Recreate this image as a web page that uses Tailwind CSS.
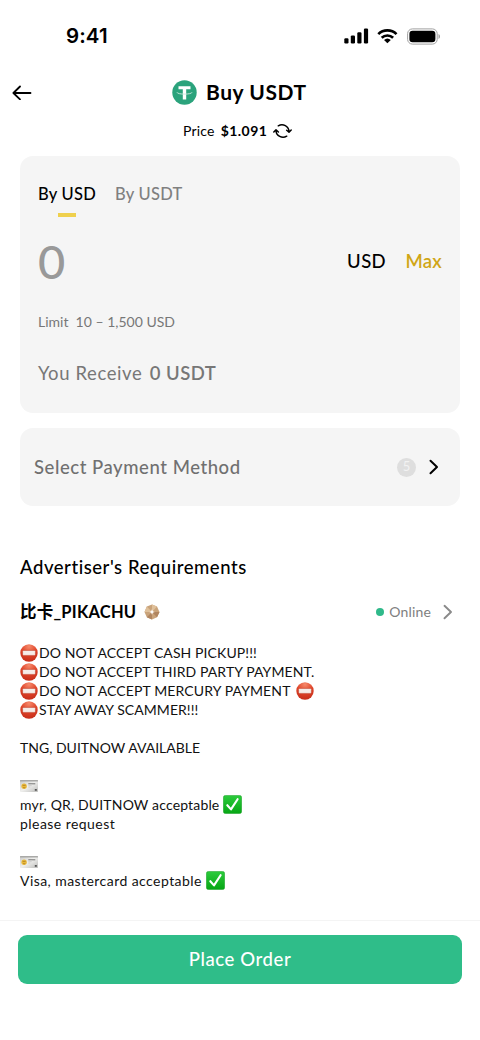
<!DOCTYPE html>
<html lang="en">
<head>
<meta charset="utf-8">
<meta name="viewport" content="width=device-width, initial-scale=1">
<title>Buy USDT</title>
<script src="https://cdn.jsdelivr.net/npm/@tailwindcss/browser@4"></script>
</head>
<body class="bg-white">
<svg class="absolute h-0 w-0">
  <defs>
    <radialGradient id="red" cx=".5" cy=".12" r=".9"><stop offset="0" stop-color="#f58a6c"/><stop offset=".5" stop-color="#e0452a"/><stop offset="1" stop-color="#c52c18"/></radialGradient>
    <linearGradient id="green" x1="0" y1="0" x2="0" y2="1"><stop offset="0" stop-color="#2ccb3c"/><stop offset="1" stop-color="#06a614"/></linearGradient>
    <linearGradient id="silver" x1="0" y1="0" x2="1" y2="1"><stop offset="0" stop-color="#c9c9c7"/><stop offset=".5" stop-color="#efefed"/><stop offset="1" stop-color="#bdbdbb"/></linearGradient>
    <symbol id="no-entry" viewBox="0 0 18 18"><circle cx="9" cy="9" r="8.7" fill="url(#red)"/><rect x="2.6" y="6.4" width="12.8" height="5" rx=".8" fill="#f6ece8" stroke="#b93a25" stroke-width=".5"/></symbol>
    <symbol id="check" viewBox="0 0 19 19"><rect x=".4" y=".4" width="18.2" height="18.2" rx="2" fill="url(#green)" stroke="#0a9a18" stroke-width=".5"/><path d="M4.3 10.2 8 14.4 14.6 4.2" fill="none" stroke="#fff" stroke-width="2.1" stroke-linecap="round" stroke-linejoin="round"/></symbol>
    <symbol id="card" viewBox="0 0 18 12"><rect width="18" height="12" rx=".8" fill="url(#silver)"/><rect width="18" height="1.6" rx=".6" fill="#a9a9a7"/><circle cx="4.1" cy="6.2" r="2.7" fill="#e9b93a"/><path d="M2.6 5.4h3M3.2 7.2l1 1 1-1.2" stroke="#9a6a1c" stroke-width=".6" fill="none"/><path d="M8.3 3.8h7" stroke="#555" stroke-width=".8"/><path d="M8.3 5.6h3.4M8.3 7h2" stroke="#b5b5b5" stroke-width=".5"/><rect x="14.8" y="9" width="2" height="1.8" fill="#555"/></symbol>
  </defs>
</svg>
<main class="flex h-[1040px] w-[480px] flex-col overflow-hidden bg-white font-['Lato','Noto_Sans_CJK_SC',sans-serif] text-black">
  <header class="flex h-[72px] shrink-0 items-center pr-[39px] pl-[66px]">
    <span class="font-['Inter',sans-serif] text-[20.500px] leading-none font-semibold tracking-[0.1px]">9:41</span>
    <div class="ml-auto flex items-center">
      <svg class="h-[16px] w-[25px]" viewBox="0 0 25 16"><rect x=".3" y="10.3" width="4.2" height="5.2" rx="1.2"/><rect x="6.8" y="7.4" width="4.2" height="8.1" rx="1.2"/><rect x="13.3" y="4.2" width="4.2" height="11.3" rx="1.2"/><rect x="19.9" y=".6" width="4.2" height="14.9" rx="1.2"/></svg>
      <svg class="ml-[8px] h-[16px] w-[21px]" viewBox="0 0 21 16"><g fill="none" stroke="#000" stroke-width="2.7"><path d="M1.3 6.1a13 13 0 0 1 18.2 0"/><path d="M4.7 9.8a8.2 8.2 0 0 1 11.4 0"/></g><path d="M10.4 15.3 7 12a5 5 0 0 1 6.8 0z"/></svg>
      <svg class="ml-[9px] h-[17px] w-[34px]" viewBox="0 0 34 17"><rect x=".6" y=".9" width="29.6" height="15.2" rx="4.8" fill="none" stroke="#a0a0a0"/><rect x="2.4" y="2.8" width="26" height="11.4" rx="3.2"/><path d="M31.5 6v5c1-.4 1.5-1.3 1.5-2.5S32.500 6.400 31.500 6z" fill="#a0a0a0"/></svg>
    </div>
  </header>
  <nav class="grid h-[40px] shrink-0 grid-cols-[40px_1fr_40px] items-center">
    <svg class="ml-[12px] h-[16px] w-[20px]" viewBox="0 0 20 16" fill="none" stroke="#000" stroke-width="1.8" stroke-linecap="round" stroke-linejoin="round"><path d="M18.500 9H1.700M8 2.500 1.400 9 8 15.300"/></svg>
    <h1 class="flex h-[40px] items-center pl-[132px]">
      <svg class="h-[25px] w-[25px]" viewBox="0 0 25 25"><circle cx="12.500" cy="12.500" r="12.200" fill="#2ba37c"/><path d="M6.500 6.300h12v3H14.200v10.200h-3.400V9.300H6.500z" fill="#fff"/><path d="M5 12.300c0 2.400 15 2.400 15 0" fill="none" stroke="#c9e8dd" stroke-width=".9"/></svg>
      <span class="mb-[2px] ml-[9px] text-[21px] leading-none font-bold tracking-[0.55px]">Buy USDT</span>
    </h1>
  </nav>
  <div class="flex h-[44px] shrink-0 items-start pt-[10px] pl-[183px]">
    <span class="flex h-[18px] items-center text-[14px] leading-none"><span class="tracking-[0.2px]">Price</span><b class="ml-[6px] tracking-[0.45px]">$1.091</b>
    <svg class="ml-[6px] h-[16px] w-[19px]" viewBox="0 0 19 16" fill="none" stroke="#000" stroke-width="1.500" stroke-linecap="round" stroke-linejoin="round"><path d="M5.300 2.800a7 7 0 0 1 10.700 5.700M13.700 13.200A7 7 0 0 1 3 7.500M.800 9 3 6.800 5.400 9M13.700 7.200 16 9.200 18.200 7"/></svg></span>
  </div>
  <section class="mx-[20px] flex h-[257px] shrink-0 flex-col rounded-[13px] bg-[#f5f5f5] px-[18px]">
    <div class="flex h-[62px] items-start gap-[19px] pt-[28px] text-[16.500px] leading-[20px] font-medium">
      <div class="flex flex-col items-center"><span class="tracking-[0.25px]">By USD</span><i class="mt-[9px] h-[4px] w-[18px] bg-[#efd04d]"></i></div>
      <span class="tracking-[0.25px] text-[#808080]">By USDT</span>
    </div>
    <div class="flex h-[86px] items-center">
      <span class="text-[47px] leading-none font-medium text-[#999]">0</span>
      <span class="mt-[1px] ml-auto text-[18.500px] font-medium tracking-[0.4px]">USD</span>
      <span class="mt-[1px] ml-[19.500px] text-[18.500px] font-semibold tracking-[0.2px] text-[#d0a617]">Max</span>
    </div>
    <p class="-mt-px flex h-[36px] items-center text-[14px] text-[#777]"><span>Limit&nbsp; 10 – 1,500 USD</span></p>
    <p class="mt-[15px] flex h-[40px] items-center text-[18.500px] text-[#777]"><span class="tracking-[0.6px]">You Receive</span><b class="ml-[7.500px] font-semibold tracking-[0.45px]">0 USDT</b></p>
  </section>
  <section class="mx-[20px] mt-[15px] flex h-[78px] shrink-0 items-center rounded-[13px] bg-[#f5f5f5] pr-[21px] pl-[14px]">
    <span class="mt-[2px] text-[18.500px] font-medium tracking-[0.55px] text-[#707070]">Select Payment Method</span>
    <span class="ml-auto flex h-[19px] w-[19px] items-center justify-center rounded-full bg-[#dedede] text-[13px] text-[#f2f2f2]">5</span>
    <svg class="ml-[13px] h-[16px] w-[10px]" viewBox="0 0 10 16" fill="none" stroke="#000" stroke-width="2" stroke-linecap="round" stroke-linejoin="round"><path d="M1.500 1.800 8 8 1.500 14.300"/></svg>
  </section>
  <h2 class="mt-[47px] flex h-[30px] shrink-0 items-center px-[20px] text-[18.500px] font-medium"><span class="tracking-[0.54px]">Advertiser's Requirements</span></h2>
  <div class="mt-[14px] flex h-[30px] shrink-0 items-center pr-[27px] pl-[20px]">
    <b class="text-[16.500px] leading-none tracking-[0.22px]">比卡_PIKACHU</b>
    <svg class="ml-[8px] h-[16px] w-[16px]" viewBox="0 0 16 16"><path d="M8 .5 13 2.600 15.500 8 13 13.200 8 15.500 2.800 13.200.500 8 2.800 2.600z" fill="#c9a37a"/><path d="M8 .5 13 2.600 8 8zM.500 8 2.800 2.600 8 8z" fill="#dfc09a"/><path d="M15.500 8 13 13.200 8 8zM2.800 13.200 8 15.500V8z" fill="#b08560"/><path d="m8 5.300.8 1.900 1.900.8-1.900.8L8 10.700l-.8-1.900L5.300 8l1.900-.8z" fill="#fff"/></svg>
    <i class="ml-auto h-[8px] w-[8px] rounded-full bg-[#2fb98a]"></i>
    <span class="mb-px ml-[5px] text-[14px] tracking-[0.15px] text-[#808080]">Online</span>
    <svg class="ml-[12px] h-[16px] w-[10px]" viewBox="0 0 10 16" fill="none" stroke="#8a8a8a" stroke-width="1.900" stroke-linecap="round" stroke-linejoin="round"><path d="M1.500 1.800 8 8 1.500 14.300"/></svg>
  </div>
  <div class="mt-[16px] px-[20px] text-[14px] leading-[19px] text-[#111]">
    <p class="flex h-[19px] items-center tracking-[0.1px]"><svg class="mr-[1px] h-[18px] w-[18px]"><use href="#no-entry"/></svg><span>DO NOT ACCEPT CASH PICKUP!!!</span></p>
    <p class="flex h-[19px] items-center tracking-[0.1px]"><svg class="mr-[1px] h-[18px] w-[18px]"><use href="#no-entry"/></svg><span>DO NOT ACCEPT THIRD PARTY PAYMENT.</span></p>
    <p class="flex h-[19px] items-center tracking-[0.12px]"><svg class="mr-[1px] h-[18px] w-[18px]"><use href="#no-entry"/></svg><span>DO NOT ACCEPT MERCURY PAYMENT</span><svg class="ml-[5px] h-[18px] w-[18px]"><use href="#no-entry"/></svg></p>
    <p class="flex h-[19px] items-center tracking-[0.05px]"><svg class="mr-[1px] h-[18px] w-[18px]"><use href="#no-entry"/></svg><span>STAY AWAY SCAMMER!!!</span></p>
    <p class="mt-[19px] h-[19px]">TNG, DUITNOW AVAILABLE</p>
    <p class="mt-[19px] flex h-[19px] items-center"><svg class="h-[12px] w-[18px]"><use href="#card"/></svg></p>
    <p class="flex h-[19px] items-center tracking-[0.16px]"><span>myr, QR, DUITNOW acceptable</span><svg class="ml-[4px] h-[19px] w-[19px]"><use href="#check"/></svg></p>
    <p class="h-[19px] tracking-[0.45px]">please request</p>
    <p class="mt-[19px] flex h-[19px] items-center"><svg class="h-[12px] w-[18px]"><use href="#card"/></svg></p>
    <p class="flex h-[19px] items-center tracking-[0.44px]"><span>Visa, mastercard acceptable</span><svg class="ml-[4px] h-[19px] w-[19px]"><use href="#check"/></svg></p>
  </div>
  <footer class="mt-auto h-[120px] shrink-0 border-t border-[#f4f4f4] px-[18px] pt-[14px]">
    <button class="flex h-[49px] w-full items-center justify-center rounded-[9px] bg-[#2fbd89] text-[18.500px] text-white"><span class="font-medium tracking-[0.6px]">Place Order</span></button>
  </footer>
</main>
</body>
</html>
